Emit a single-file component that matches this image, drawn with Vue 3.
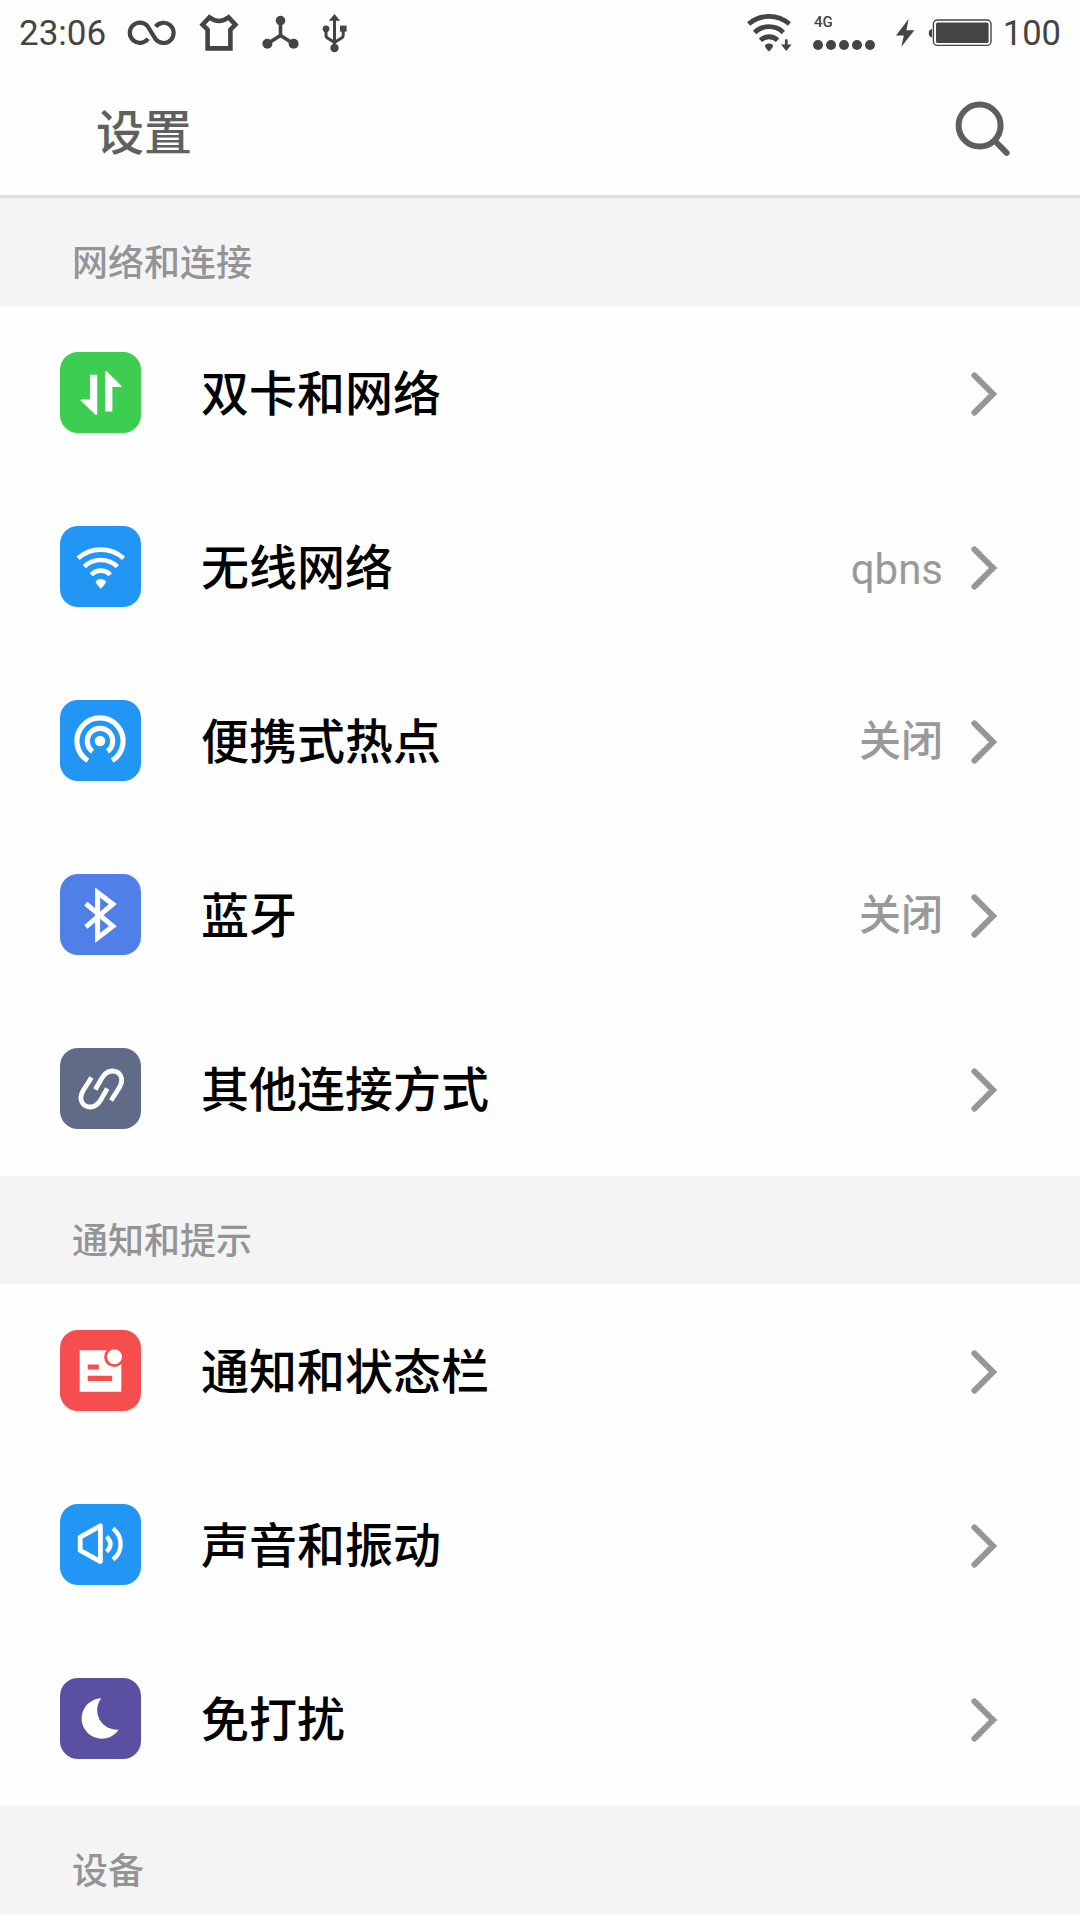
<template>
  <div class="settings">
    <div class="status-bar">
      <span class="clock">23:06</span>
      <svg class="status-left" width="230" height="66" viewBox="120 0 230 66">
        <path class="line" stroke-width="4.2" d="M148 38.8A10.1 10.1 0 1 1 147.6 26.2L155.8 39.4A10.1 10.1 0 1 0 155.6 26.6" />
        <path class="line" stroke-width="4.6" d="M209.4 17.4Q219 24.6 228.6 17.4L235.4 24.6L230.4 29.6V48.4H207.6V29.6L202.6 24.6Z" />
        <path class="line" stroke-width="3.6" d="M280.5 20V35.5M267 44L280.5 35.5L294 44" />
        <circle class="solid" cx="280.5" cy="20.6" r="4.8" />
        <circle class="solid" cx="267.4" cy="43.8" r="5" />
        <circle class="solid" cx="293.6" cy="43.8" r="5" />
        <path class="line" stroke-width="3" d="M334.5 19V47M326 29V35.5Q326 37 327.5 38L334.5 42.5L341.5 38Q343.2 37 343.2 35.5V29" />
        <path class="solid" d="M334.5 14L340.2 20.8H328.8Z" />
        <circle class="solid" cx="334.5" cy="48" r="4.2" />
        <circle class="solid" cx="326" cy="28.8" r="3.4" />
        <rect class="solid" x="340" y="25.6" width="6.6" height="6" />
      </svg>
      <span class="spacer"></span>
      <svg width="50" height="66" viewBox="745 0 50 66">
        <path class="line" stroke-width="4.8" d="M748.6 24A31 31 0 0 1 789.4 24M754.6 32.4A21 21 0 0 1 783.4 32.4M760.4 40.2A12.4 12.4 0 0 1 777.6 40.2" />
        <path class="solid" d="M765 46Q765 43.4 769 43.4Q773 43.4 773 46Q773 47.6 769 51.4Q765 47.6 765 46Z" />
        <path class="line" stroke-width="2.8" d="M786.3 39.4V46" />
        <path class="solid" d="M781 44.4H791.6L786.3 51Z" />
      </svg>
      <div class="signal">
        <span class="network">4G</span>
        <div class="dots">
          <i v-for="n in 5" :key="n"></i>
        </div>
      </div>
      <svg width="106" height="66" viewBox="890 0 106 66">
        <path class="solid" d="M908.6 19L896 35.4H903.8L901.4 46.8L914.4 30.2H906.4Z" />
        <path class="solid" d="M932 29Q928.8 29.6 928.8 33.2Q928.8 36.8 932 37.4Z" />
        <rect class="line" stroke-width="1.4" x="933.4" y="20" width="57.6" height="25.4" rx="4" />
        <rect class="solid" x="936" y="22.6" width="52.6" height="20.4" rx="1.6" />
      </svg>
      <span class="battery-level">100</span>
    </div>

    <header class="title-bar">
      <h1>设置</h1>
      <svg class="search" width="60" height="60" viewBox="0 0 60 60">
        <circle cx="26.6" cy="26.6" r="21" />
        <path d="M42 42L53.6 53.8" />
      </svg>
    </header>

    <section v-for="group in groups" :key="group.title">
      <h2 class="group-title">{{ group.title }}</h2>
      <div v-for="item in group.items" :key="item.label" class="row">
        <div class="icon" :class="item.icon">
          <svg width="81" height="81" viewBox="0 0 81 81">
            <g v-if="item.icon === 'sim'" class="fill">
              <path d="M30 22.7H37.2V62Q36.6 63.4 35.2 62.6L20.5 48.6L21 47.6H30Z" />
              <path d="M45 20Q45.6 18.6 47 19.6L61.7 34L61.2 35H52.4V59.4H45Z" />
            </g>
            <g v-else-if="item.icon === 'wifi'">
              <path stroke-width="4.6" d="M18 32.2A34.5 34.5 0 0 1 63.6 32.2M24.3 40.6A24 24 0 0 1 57.3 40.6M31.3 48.8A13 13 0 0 1 50.3 48.8" />
              <path class="fill" d="M35.8 56.2Q36.6 53 40.8 53Q45 53 45.8 56.2Q45 58.4 40.8 62.8Q36.6 58.4 35.8 56.2Z" />
            </g>
            <g v-else-if="item.icon === 'hotspot'">
              <circle class="fill" cx="40" cy="41" r="5.3" />
              <path stroke-width="5.2" d="M32.6 51.4A12.7 12.7 0 1 1 47.4 51.4M27.8 60.6A23.1 23.1 0 1 1 52.2 60.6" />
            </g>
            <path v-else-if="item.icon === 'bluetooth'" stroke-width="5" d="M25.8 29.6L52.8 52.2L37.6 64V18.6L52.8 30.2L25.8 52.8" />
            <path v-else-if="item.icon === 'link'" stroke-width="4.8" d="M31.5 29.5L23.5 42C17.5 52 23 59 30.5 59C36 59 38.5 55.5 41 51.5L47.3 40.5M51.1 52.5L59.1 40C65.1 30 59.6 23 52.1 23C46.6 23 44.1 26.5 41.6 30.5L35.3 41.5" />
            <g v-else-if="item.icon === 'notice'">
              <path class="fill" d="M19.7 20.3H61.3V61.7H19.7Z" />
              <path class="cut" d="M27.7 34.6H38.8V39.6H27.7ZM27.7 45.8H52.2V51H27.7Z" />
              <circle class="cut" cx="54.3" cy="26.9" r="10.2" />
              <circle class="fill" cx="54.5" cy="26.8" r="7.5" />
            </g>
            <g v-else-if="item.icon === 'sound'">
              <path stroke-width="4.8" stroke-linejoin="round" d="M40.4 21.8V57.6L20.2 46.4V33.2Z" />
              <path stroke-width="4.4" d="M46.6 32.6Q54.4 40 46.6 47.8M53 24.4A19.6 19.6 0 0 1 53 55.4" />
            </g>
            <path v-else class="fill" d="M41.3 20.3A20.2 20.2 0 1 0 58.7 51.6A19.4 19.4 0 0 1 41.3 20.3Z" />
          </svg>
        </div>
        <span class="label">{{ item.label }}</span>
        <span v-if="item.value" class="value" :class="{ latin: item.icon === 'wifi' }">{{ item.value }}</span>
        <svg class="chevron" width="27" height="44" viewBox="0 0 27 44">
          <path d="M3.4 3.4L22 22L3.4 40.6" />
        </svg>
      </div>
    </section>
  </div>
</template>

<script setup>
const groups = [
  {
    title: '网络和连接',
    items: [
      { icon: 'sim', label: '双卡和网络' },
      { icon: 'wifi', label: '无线网络', value: 'qbns' },
      { icon: 'hotspot', label: '便携式热点', value: '关闭' },
      { icon: 'bluetooth', label: '蓝牙', value: '关闭' },
      { icon: 'link', label: '其他连接方式' }
    ]
  },
  {
    title: '通知和提示',
    items: [
      { icon: 'notice', label: '通知和状态栏' },
      { icon: 'sound', label: '声音和振动' },
      { icon: 'dnd', label: '免打扰' }
    ]
  },
  { title: '设备', items: [] }
]
</script>

<style>
body {
  background: #fefefe;
}
</style>

<style scoped>
.settings {
  width: 1080px;
  height: 1920px;
  overflow: hidden;
  background: #fefefe;
  font-family: Roboto, "Noto Sans CJK SC", sans-serif;
}

.status-bar {
  display: flex;
  height: 66px;
  padding: 0 19px;
  box-sizing: border-box;
  color: #444;
  font-size: 35px;
  line-height: 67px;
}

.status-bar svg {
  flex: none;
}

.status-left {
  margin-left: 12px;
}

.clock {
  width: 89px;
}

.battery-level {
  width: 61px;
  margin-left: 4px;
  font-size: 34.5px;
  text-align: right;
}

.spacer {
  flex: 1;
}

.line {
  fill: none;
  stroke: #444;
}

.solid {
  fill: #444;
}

.signal {
  width: 77px;
  margin: 14px 0 0 18px;
}

.network {
  display: block;
  height: 26px;
  padding-left: 1px;
  font-size: 15px;
  font-weight: 500;
  line-height: 17px;
}

.dots {
  display: flex;
  gap: 3px;
}

.dots i {
  width: 10px;
  height: 10px;
  border-radius: 50%;
  background: #444;
}

.title-bar {
  display: flex;
  align-items: center;
  justify-content: space-between;
  height: 132px;
  padding: 0 67px 3px 96px;
  box-sizing: border-box;
  border-bottom: 3px solid #dedede;
}

.title-bar h1 {
  margin: 0;
  padding-top: 10px;
  color: #606060;
  font-size: 48px;
  font-weight: 500;
  line-height: 60px;
}

.search {
  fill: none;
  stroke: #5e5e5e;
  stroke-width: 6;
  stroke-linecap: round;
}

.group-title {
  height: 108px;
  margin: 0;
  padding: 20px 0 0 72px;
  box-sizing: border-box;
  background: #f4f4f4;
  color: #949494;
  font-size: 36px;
  font-weight: 500;
  line-height: 92px;
}

.row {
  display: flex;
  align-items: center;
  height: 174px;
  padding: 0 82px 0 60px;
  box-sizing: border-box;
}

.icon {
  width: 81px;
  height: 81px;
  margin-bottom: 1px;
  border-radius: 18px;
}

.icon svg {
  display: block;
  fill: none;
  stroke: #fff;
}

.icon .fill {
  fill: #fff;
  stroke: none;
}

.icon .cut {
  fill: #f64d4f;
  stroke: none;
}

.sim { background: #3ccd51; }
.wifi, .hotspot, .sound { background: #2196f5; }
.bluetooth { background: #4f80e7; }
.link { background: #5f6b87; }
.notice { background: #f64d4f; }
.dnd { background: #5950a1; }

.label {
  flex: 1;
  margin-left: 60px;
  padding-top: 3px;
  color: #000;
  font-size: 48px;
  font-weight: 500;
  line-height: 60px;
}

.value {
  margin-right: 28px;
  padding-top: 2px;
  color: #999;
  font-size: 42px;
  font-weight: 500;
  line-height: 54px;
}

.value.latin {
  padding-top: 5px;
  font-weight: 400;
}

.chevron {
  margin-top: 2px;
  fill: none;
  stroke: #969696;
  stroke-width: 6;
  stroke-linecap: round;
}
</style>
